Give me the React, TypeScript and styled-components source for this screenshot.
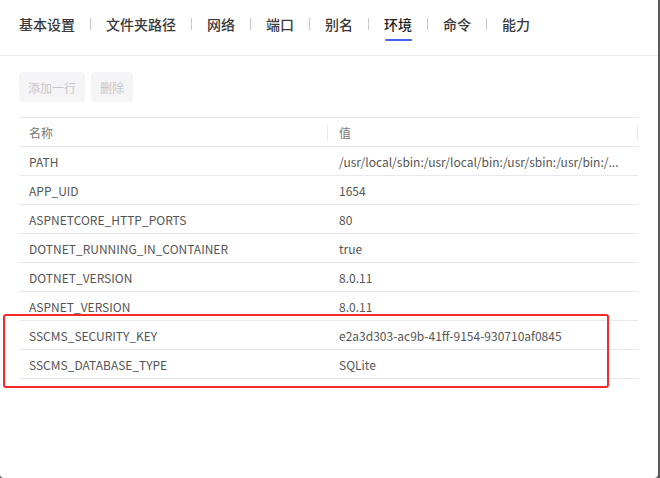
import React from 'react';
import styled, {createGlobalStyle} from 'styled-components';

const GlobalStyle = createGlobalStyle`
    html, body {
        margin: 0;
        padding: 0;
        background: #5a5a5a;
    }

    body {
        font-family: "Noto Sans CJK SC", "Noto Sans", sans-serif;
    }
`;

const Panel = styled.div`
    width: 658px;
    height: 478px;
    background: #fff;
    border-radius: 0 0 4px 4px;
    position: relative;
    overflow: hidden;
`;

const TabBar = styled.div`
    height: 56px;
    padding: 0 19px 7px;
    display: flex;
    align-items: center;
    border-bottom: 1px solid #e8e8e8;
    box-sizing: border-box;
`;

const Tab = styled.div<{active?: boolean}>`
    position: relative;
    font-size: 14px;
    line-height: 20px;
    color: ${(p) => (p.active ? '#222' : '#3a3a3a')};
    font-weight: 500;
    cursor: pointer;

    ${(p) =>
        p.active &&
        `
            &::after {
                content: '';
                position: absolute;
                left: 1px;
                right: 0;
                bottom: -7px;
                height: 2px;
                background: #4461f2;
                border-radius: 1px;
            }
        `}
`;

const Divider = styled.span`
    width: 1px;
    height: 12px;
    background: #c8c8c8;
    margin: 0 15px;
`;

const Content = styled.div`
    padding: 16px 19px 0;
`;

const Toolbar = styled.div`
    display: flex;
    gap: 6px;
    margin-bottom: 15px;
`;

const Button = styled.button`
    height: 30px;
    padding: 0 9px;
    border: 0;
    border-radius: 4px;
    background: #f5f5f7;
    color: #c4c6cc;
    font-family: inherit;
    font-size: 12px;
    cursor: not-allowed;
`;

const Table = styled.div`
    width: 619px;
    border-top: 1px solid #e6e8eb;
`;

const Row = styled.div`
    display: grid;
    grid-template-columns: 309px 310px;
    height: 29px;
    border-bottom: 1px solid #e6e8eb;
    box-sizing: border-box;
`;

const Cell = styled.div<{head?: boolean}>`
    position: relative;
    display: flex;
    align-items: center;
    padding: 0 10px;
    font-size: 12px;
    color: ${(p) => (p.head ? '#777' : '#555')};
    overflow: hidden;

    ${(p) =>
        p.head &&
        `
            &::after {
                content: '';
                position: absolute;
                right: 0;
                top: 7px;
                height: 15px;
                width: 1px;
                background: #e6e8eb;
            }
        `}

    &:nth-child(2) {
        padding-left: 11px;
    }
`;

const Value = styled.span`
    white-space: nowrap;
    overflow: hidden;
    text-overflow: ellipsis;
`;

const Highlight = styled.div`
    position: absolute;
    left: 3px;
    top: 314px;
    width: 606px;
    height: 74px;
    border: 2px solid #f5282a;
    border-radius: 3px;
    box-sizing: border-box;
    pointer-events: none;
`;

const tabs = ['基本设置', '文件夹路径', '网络', '端口', '别名', '环境', '命令', '能力'];

const variables: [string, string][] = [
    ['PATH', '/usr/local/sbin:/usr/local/bin:/usr/sbin:/usr/bin:/...'],
    ['APP_UID', '1654'],
    ['ASPNETCORE_HTTP_PORTS', '80'],
    ['DOTNET_RUNNING_IN_CONTAINER', 'true'],
    ['DOTNET_VERSION', '8.0.11'],
    ['ASPNET_VERSION', '8.0.11'],
    ['SSCMS_SECURITY_KEY', 'e2a3d303-ac9b-41ff-9154-930710af0845'],
    ['SSCMS_DATABASE_TYPE', 'SQLite']
];

const App = () => (
    <>
        <GlobalStyle />
        <Panel>
            <TabBar>
                {tabs.map((tab, index) => (
                    <React.Fragment key={tab}>
                        {index > 0 && <Divider />}
                        <Tab active={tab === '环境'}>{tab}</Tab>
                    </React.Fragment>
                ))}
            </TabBar>

            <Content>
                <Toolbar>
                    <Button type='button'>添加一行</Button>
                    <Button type='button'>删除</Button>
                </Toolbar>

                <Table>
                    <Row>
                        <Cell head>名称</Cell>
                        <Cell head>值</Cell>
                    </Row>
                    {variables.map(([name, value]) => (
                        <Row key={name}>
                            <Cell>{name}</Cell>
                            <Cell>
                                <Value>{value}</Value>
                            </Cell>
                        </Row>
                    ))}
                </Table>
            </Content>

            <Highlight />
        </Panel>
    </>
);

export default App;
